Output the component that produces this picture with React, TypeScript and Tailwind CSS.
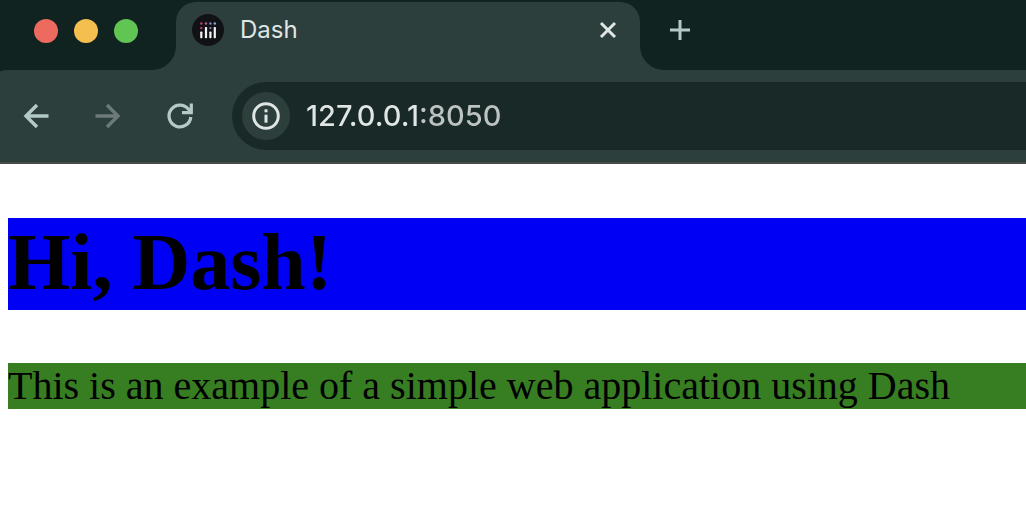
import React, { useState } from "react";

function DashLogo() {
  return (
    <svg className="size-8 shrink-0" viewBox="0 0 32 32" aria-hidden="true">
      <circle cx="16" cy="16" r="16" fill="#111216" />
      <g fill="#f4f4f4">
        <rect x="8.2" y="17.6" width="2.2" height="6.6" rx="0.7" />
        <rect x="12.9" y="13" width="2.2" height="11.2" rx="0.7" />
        <rect x="17.3" y="17.6" width="2.2" height="6.6" rx="0.7" />
        <rect x="21.7" y="13" width="2.2" height="11.2" rx="0.7" />
      </g>
      <circle cx="9.3" cy="9.5" r="1.2" fill="#c8386a" />
      <circle cx="9.3" cy="14.1" r="1.2" fill="#c8386a" />
      <circle cx="14" cy="9.5" r="1.2" fill="#a9608c" />
      <circle cx="18.4" cy="9.5" r="1.2" fill="#8585b8" />
      <circle cx="18.4" cy="14.1" r="1.2" fill="#77779f" />
      <circle cx="22.8" cy="9.5" r="1.2" fill="#72b8dc" />
    </svg>
  );
}

function TabStrip() {
  return (
    <div className="flex h-[70px] items-end bg-[#112321]">
      <div className="flex h-full w-[152px] shrink-0 items-center gap-4 pb-2 pl-[34px]">
        <button aria-label="Close window" className="size-6 rounded-full bg-[#ed6a5e]" />
        <button aria-label="Minimize window" className="size-6 rounded-full bg-[#f5bf4f]" />
        <button aria-label="Zoom window" className="size-6 rounded-full bg-[#61c554]" />
      </div>
      <div className="size-6 shrink-0 bg-[#2d3f3d]">
        <div className="size-full rounded-br-full bg-[#112321]" />
      </div>
      <div className="flex h-[68px] w-[464px] items-start rounded-t-[20px] bg-[#2d3f3d] px-4 pt-3">
        <DashLogo />
        <span className="ml-4 flex-1 text-[24px] leading-8 text-[#dfe6e4]">Dash</span>
        <button aria-label="Close tab" className="flex size-8 items-center justify-center">
          <svg className="size-8" viewBox="0 0 32 32" fill="none" stroke="#dfe6e4" strokeWidth="3">
            <path d="M9 9l14 14M23 9L9 23" />
          </svg>
        </button>
      </div>
      <div className="size-6 shrink-0 bg-[#2d3f3d]">
        <div className="size-full rounded-bl-full bg-[#112321]" />
      </div>
      <button aria-label="New tab" className="mb-6 size-8 shrink-0">
        <svg className="size-8" viewBox="0 0 32 32" fill="none" stroke="#b4cac7" strokeWidth="3">
          <path d="M6 16h20M16 6v20" />
        </svg>
      </button>
    </div>
  );
}

function Toolbar() {
  const [address, setAddress] = useState("127.0.0.1:8050");
  return (
    <div className="bg-[#112321]">
      <div className="flex items-center rounded-tl-[8px_2px] border-b-2 border-[#4a4a48] bg-[#2d3f3d] pt-3 pb-3 pl-5">
        <div className="flex shrink-0 gap-10">
          <button aria-label="Back" className="size-8">
            <svg className="size-8" viewBox="0 0 32 32" fill="none" stroke="#b4cac7" strokeWidth="3.4">
              <path d="M28.5 16H6.5M17 5L6 16l11 11" />
            </svg>
          </button>
          <button aria-label="Forward" className="size-8" disabled>
            <svg className="size-8" viewBox="0 0 32 32" fill="none" stroke="#6c7a78" strokeWidth="3.4">
              <path d="M3.5 16h22M15 5l11 11-11 11" />
            </svg>
          </button>
          <button aria-label="Reload" className="size-8">
            <svg className="size-8" viewBox="0 0 32 32" fill="none" stroke="#b4cac7" strokeWidth="3.2">
              <path d="M26.8 17A10.9 10.9 0 1 1 24.5 9.2L27 12.5" />
              <path d="M27.3 3.5v9.2H18" />
              <path d="M22.5 12.7L27 8v4.7z" fill="#b4cac7" stroke="none" />
            </svg>
          </button>
        </div>
        <div className="ml-9 flex h-[68px] min-w-0 flex-1 items-center rounded-l-full bg-[#182927] pl-[10px]">
          <button
            aria-label="View site information"
            className="flex size-12 shrink-0 items-center justify-center rounded-full bg-[#2d3f3d]"
          >
            <svg className="size-8" viewBox="0 0 32 32" fill="none" stroke="#dfe6e4" strokeWidth="3">
              <circle cx="16" cy="16" r="12.3" />
              <path d="M16 14.7v8" />
              <path d="M16 9.3v3" />
            </svg>
          </button>
          <input
            type="text"
            aria-label="Address"
            spellCheck={false}
            value={address}
            onChange={(e) => setAddress(e.target.value)}
            className="ml-4 min-w-0 flex-1 bg-[linear-gradient(90deg,#e0e6e5_113px,#bcc3c2_113px)] bg-clip-text text-[29px] leading-10 font-medium text-transparent caret-white outline-none"
          />
        </div>
      </div>
    </div>
  );
}

export default function App() {
  return (
    <div className="min-h-screen overflow-x-hidden bg-white">
      <header className="font-[Inter,sans-serif]">
        <TabStrip />
        <Toolbar />
      </header>
      <main className="pt-[54px] pl-2 font-['Liberation_Serif',serif] text-black">
        <h1 className="bg-[#0000f5] pb-1 text-[80px] leading-[88px] font-bold">Hi, Dash!</h1>
        <p className="mt-[53px] bg-[#377e22] text-[40px] leading-[46px]">
          This is an example of a simple web application using Dash
        </p>
      </main>
    </div>
  );
}
